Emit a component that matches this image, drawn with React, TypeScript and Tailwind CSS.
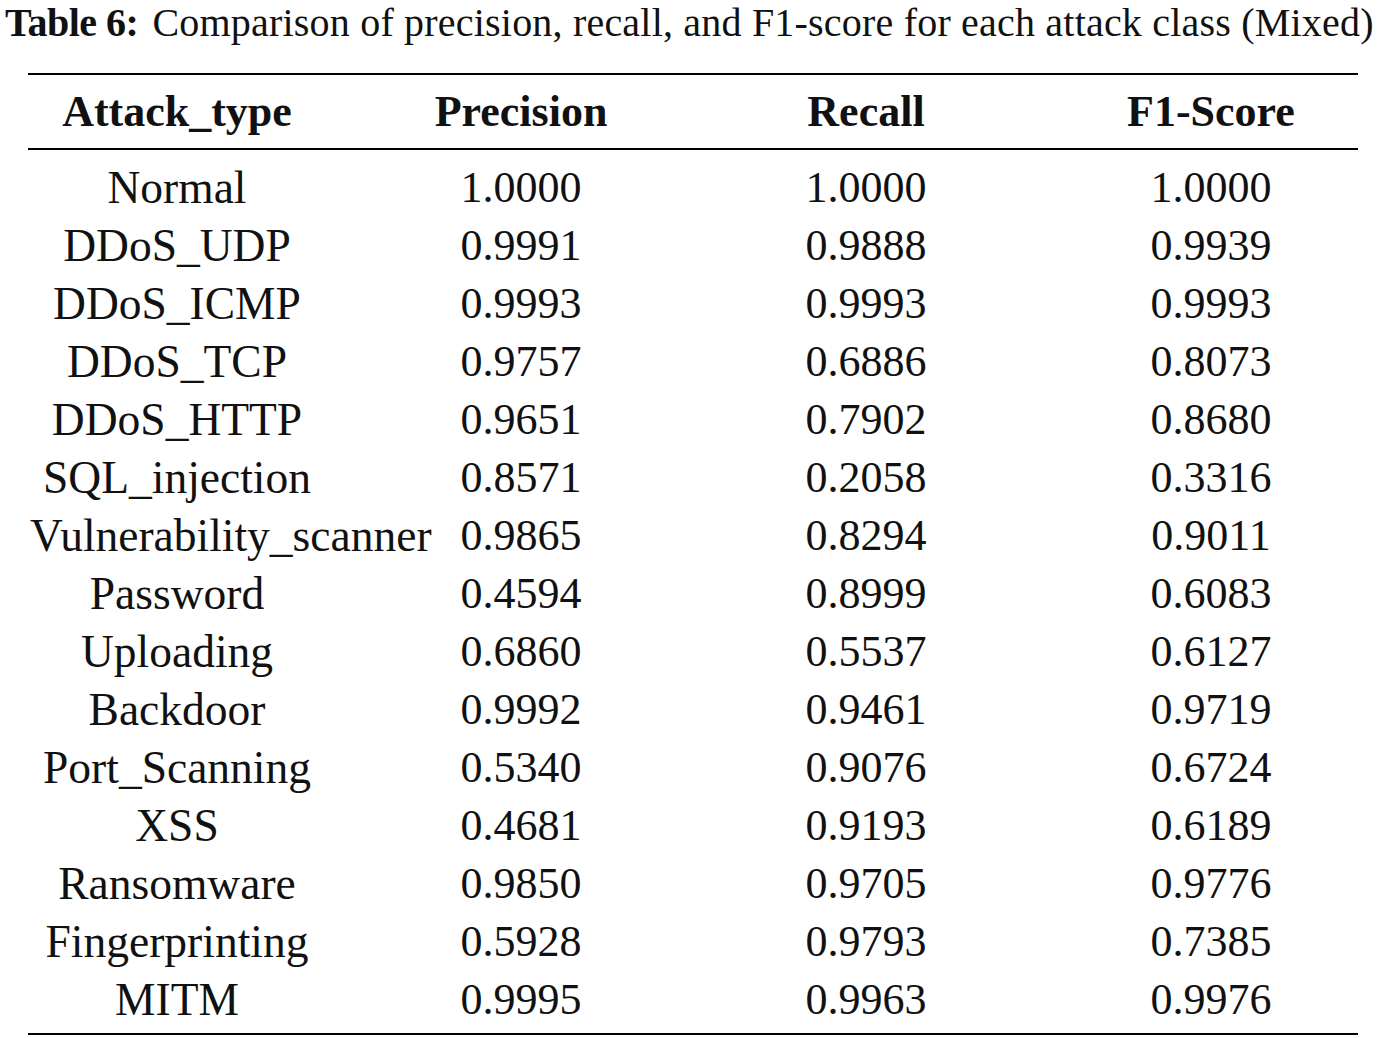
/**
 * Table 6 — per-class precision / recall / F1 for the mixed attack set.
 */

const rows: [string, string, string, string][] = [
  ["Normal", "1.0000", "1.0000", "1.0000"],
  ["DDoS_UDP", "0.9991", "0.9888", "0.9939"],
  ["DDoS_ICMP", "0.9993", "0.9993", "0.9993"],
  ["DDoS_TCP", "0.9757", "0.6886", "0.8073"],
  ["DDoS_HTTP", "0.9651", "0.7902", "0.8680"],
  ["SQL_injection", "0.8571", "0.2058", "0.3316"],
  ["Vulnerability_scanner", "0.9865", "0.8294", "0.9011"],
  ["Password", "0.4594", "0.8999", "0.6083"],
  ["Uploading", "0.6860", "0.5537", "0.6127"],
  ["Backdoor", "0.9992", "0.9461", "0.9719"],
  ["Port_Scanning", "0.5340", "0.9076", "0.6724"],
  ["XSS", "0.4681", "0.9193", "0.6189"],
  ["Ransomware", "0.9850", "0.9705", "0.9776"],
  ["Fingerprinting", "0.5928", "0.9793", "0.7385"],
  ["MITM", "0.9995", "0.9963", "0.9976"],
];

const grid = "grid grid-cols-[298px_390px_300px_342px]";

export default function App() {
  return (
    <div className="min-h-screen w-[1385px] bg-white text-[#111] font-['Liberation_Serif','Times_New_Roman',serif]">
      <div className="pl-[5px] text-[40px] leading-[46px] whitespace-nowrap">
        <span className="font-bold tracking-[-0.5px]">Table 6:</span>
        <span className="ml-[14px] tracking-[0.2px]">Comparison of precision, recall, and F1-score for each attack class (Mixed)</span>
      </div>

      <div className="ml-[28px] mt-[27px] w-[1330px] border-y-[2px] border-black">
        <div className={`${grid} h-[75px] items-center border-b-[2px] border-black text-[44px] font-bold leading-[58px]`}>
          <div className="text-center">Attack_type</div>
          <div className="text-center">Precision</div>
          <div className="text-center">Recall</div>
          <div className="pl-[48px] text-center">F1-Score</div>
        </div>

        <div className="pt-[9px] pb-[4px] text-[44px] leading-[58px]">
          {rows.map(([name, p, r, f]) => (
            <div key={name} className={grid}>
              <div
                className={
                  name.length > 16
                    ? "pl-[2px] text-[45.5px] whitespace-nowrap"
                    : "text-center text-[45.5px] whitespace-nowrap"
                }
              >
                {name}
              </div>
              <div className="text-center">{p}</div>
              <div className="text-center">{r}</div>
              <div className="pl-[48px] text-center">{f}</div>
            </div>
          ))}
        </div>
      </div>
    </div>
  );
}
